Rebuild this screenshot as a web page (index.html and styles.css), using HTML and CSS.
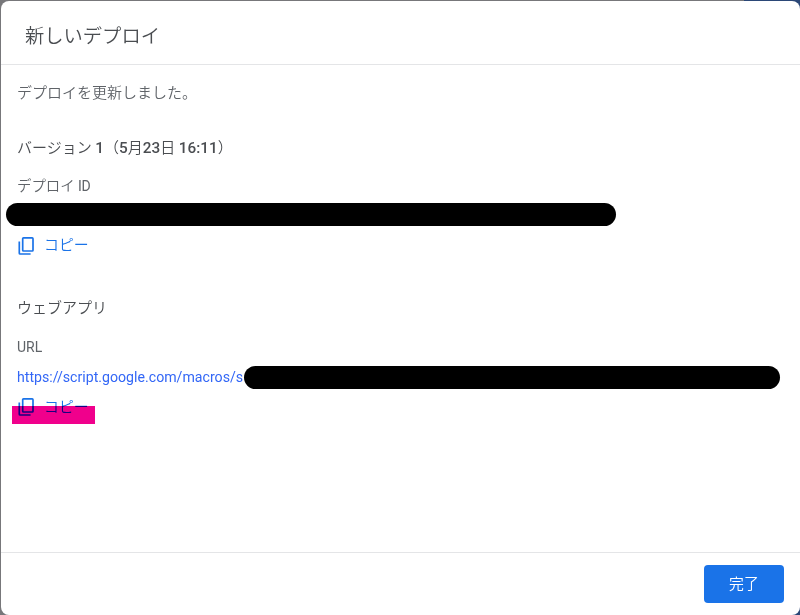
FILE: index.html
```html
<!DOCTYPE html>
<html lang="ja">
<head>
  <meta charset="UTF-8" />
  <meta name="viewport" content="width=device-width, initial-scale=1"/>
  <title>新しいデプロイ</title>
  <link rel="stylesheet" href="styles.css">
</head>
<body>

  <div class="dialog">
    <!-- Header -->
    <header class="dialog-header">
      <h1>新しいデプロイ</h1>
    </header>

    <!-- Content -->
    <main class="dialog-body">
      <p class="status">デプロイを更新しました。</p>

      <section class="version">
        <h2>バージョン <b>1</b>（<b>5</b>月<b>23</b>日 <b>16:11</b>）</h2>
        <p class="label">デプロイ <span class="latin">ID</span></p>
        <div class="redacted redacted-id"></div>
        <button class="copy-btn">
          <svg class="copy-icon" viewBox="0 0 16 18">
            <rect x="4.7" y="0.9" width="10.3" height="13.1" rx="0.8" />
            <path d="M1.3 4.6V16.2Q1.3 17 2.1 17H12.6" />
          </svg>
          <span>コピー</span>
        </button>
      </section>

      <section class="web-app">
        <h2>ウェブアプリ</h2>
        <p class="label"><span class="latin">URL</span></p>
        <div class="url-row">
          <a href="#">https://script.google.com/macros/s</a>
          <div class="redacted redacted-url"></div>
        </div>
        <button class="copy-btn">
          <svg class="copy-icon" viewBox="0 0 16 18">
            <rect x="4.7" y="0.9" width="10.3" height="13.1" rx="0.8" />
            <path d="M1.3 4.6V16.2Q1.3 17 2.1 17H12.6" />
          </svg>
          <span>コピー</span>
          <span class="marker"></span>
        </button>
      </section>
    </main>

    <!-- Footer -->
    <footer class="dialog-footer">
      <button class="done-btn">完了</button>
    </footer>
  </div>

</body>
</html>
```

FILE: styles.css
```css
* {
  box-sizing: border-box;
}

body {
  margin: 0;
  padding: 1px 0 0 1px;
  height: 615px;
  overflow: hidden;
  background: linear-gradient(90deg, #77777a 744px, #2b4777 744px);
  font-family: Roboto, "Noto Sans CJK JP", sans-serif;
  font-size: 14.9px;
  font-weight: 350;
  line-height: 24px;
  color: #5f6368;
}

h1, h2, p {
  margin: 0;
  font-weight: 350;
}

/* Dialog */
.dialog {
  display: flex;
  flex-direction: column;
  height: 614px;
  background: #fff;
  border-radius: 8px;
}

.dialog-header {
  display: flex;
  align-items: center;
  height: 64px;
  padding: 8px 24px 0;
  border-bottom: 1px solid #e4e5e7;
}

.dialog-header h1 {
  font-size: 19.3px;
  color: #4a4d51;
}

.dialog-body {
  flex: 1;
  padding: 16px 16px 0;
}

.version {
  margin-top: 31px;
}

.web-app {
  margin-top: 39px;
}

.dialog-body h2 {
  font-size: 15px;
  color: #4a4d51;
}

.dialog-body h2 b {
  font-size: 15.3px;
  font-weight: 500;
}

.status {
  font-size: 15px;
}

.label {
  margin-top: 15px;
}

.version .label {
  height: 24px;
  margin-top: 14px;
  font-size: 14.4px;
}

.latin {
  font-size: 14px;
  font-weight: 400;
}

.version .latin {
  letter-spacing: -0.3px;
}

.redacted {
  height: 23px;
  border-radius: 12px;
  background: #000;
}

.redacted-id {
  width: 610px;
  margin: 5px 0 0 -11px;
}

.redacted-url {
  width: 536px;
  margin-top: 1px;
}

.url-row {
  display: flex;
  height: 24px;
  margin-top: 6px;
}

.url-row a {
  width: 227px;
  font-size: 14.15px;
  font-weight: 400;
  color: #3367f6;
  text-decoration: none;
  white-space: nowrap;
}

/* Copy buttons */
.copy-btn {
  position: relative;
  display: flex;
  align-items: center;
  gap: 10px;
  height: 24px;
  margin-top: 7px;
  padding: 0 0 0 1px;
  border: none;
  background: none;
  font: inherit;
  color: #1a73e8;
}

.version .copy-icon {
  margin-top: 1px;
}

.web-app .copy-btn {
  margin-top: 6px;
}

.copy-icon {
  width: 16px;
  height: 18px;
  fill: none;
  stroke: #1a73e8;
  stroke-width: 1.7;
}

/* Highlighter over the web app copy button */
.marker {
  position: absolute;
  left: -5px;
  top: 11px;
  width: 83px;
  height: 18px;
  background: #f0008c;
  mix-blend-mode: multiply;
}

/* Footer */
.dialog-footer {
  display: flex;
  justify-content: flex-end;
  height: 63px;
  padding: 12px 16px 0;
  border-top: 1px solid #e4e5e7;
}

.done-btn {
  width: 80px;
  height: 38px;
  padding: 0;
  border: none;
  border-radius: 4px;
  background: #1a73e8;
  font: inherit;
  color: #fff;
}
```
